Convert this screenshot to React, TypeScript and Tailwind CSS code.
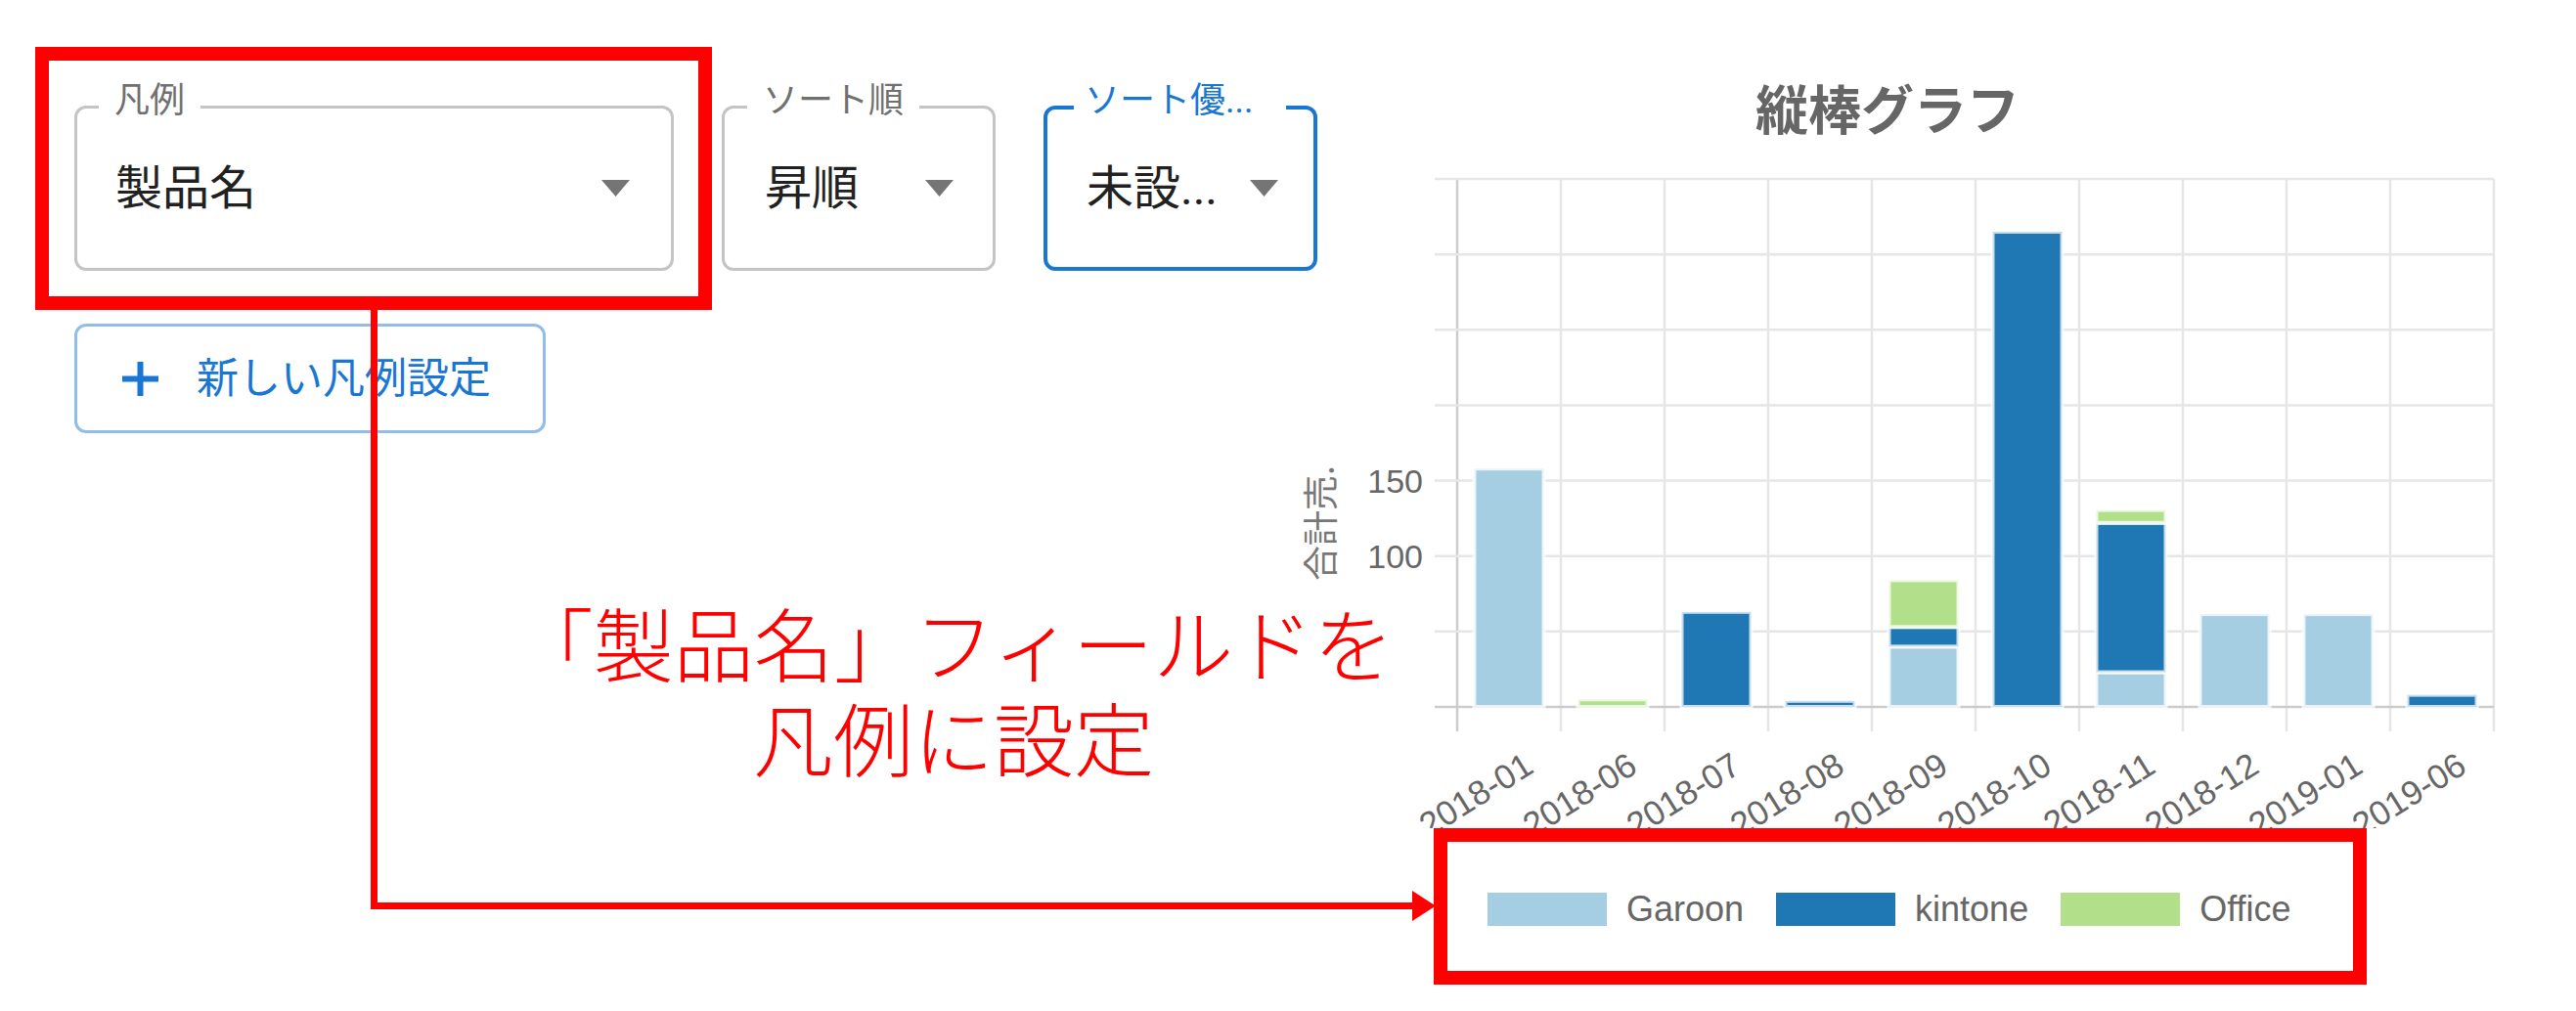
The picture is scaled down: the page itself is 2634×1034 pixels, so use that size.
import React from "react";

type Key = "G" | "K" | "O";
const COLORS: Record<Key, string> = { G: "#a6cee3", K: "#1f78b4", O: "#b2df8a" };
const LABELS = [
  "2018-01",
  "2018-06",
  "2018-07",
  "2018-08",
  "2018-09",
  "2018-10",
  "2018-11",
  "2018-12",
  "2019-01",
  "2019-06",
];
const DATA: [Key, number][][] = [
  [["G", 158]],
  [["O", 5]],
  [["K", 63]],
  [["K", 4]],
  [
    ["G", 40],
    ["K", 13],
    ["O", 31],
  ],
  [["K", 315]],
  [
    ["G", 23],
    ["K", 99],
    ["O", 8.5],
  ],
  [["G", 61.5]],
  [["G", 61.5]],
  [["K", 8]],
];

function Arrow() {
  return (
    <svg width={29} height={17} viewBox="0 0 29 17" className="shrink-0">
      <polygon points="0,0 29,0 14.5,17" fill="#757575" />
    </svg>
  );
}

function Chart() {
  const x0 = 142;
  const colW = 106;
  const base = 582;
  const step = 77.14;
  const unit = step / 50;
  const barW = 71;
  const sans = "'Liberation Sans', Arial, sans-serif";
  return (
    <div className="relative w-[1212px] h-[706px] shrink-0">
      <span className="absolute left-[-20px] top-[376px] w-[40px] h-[36px] flex items-center justify-center">
        <span className="block -rotate-90 whitespace-nowrap text-[36px] leading-[36px] text-[#777777] font-['Noto_Sans_CJK_JP',sans-serif]">
          合計売.
        </span>
      </span>
      <svg width={1212} height={706} viewBox="0 0 1212 706" className="block">
        {Array.from({ length: 11 }).map((_, i) => (
          <line
            key={"v" + i}
            x1={x0 + colW * i}
            x2={x0 + colW * i}
            y1={42}
            y2={607}
            stroke={i === 0 ? "#cccccc" : "#e6e6e6"}
            strokeWidth={2.5}
          />
        ))}
        {Array.from({ length: 8 }).map((_, k) => (
          <line
            key={"h" + k}
            x1={x0 - 23}
            x2={x0 + colW * 10}
            y1={base - step * k}
            y2={base - step * k}
            stroke={k === 0 ? "#cccccc" : "#e6e6e6"}
            strokeWidth={2.5}
          />
        ))}
        {DATA.map((segs, i) => {
          const bx = x0 + colW * i + (colW - barW) / 2;
          let acc = 0;
          return (
            <g key={"b" + i}>
              {segs.map(([k, v], j) => {
                const y1 = base - acc * unit;
                acc += v;
                const y2 = base - acc * unit;
                return (
                  <rect
                    key={j}
                    x={bx}
                    y={y2}
                    width={barW}
                    height={y1 - y2}
                    fill={COLORS[k]}
                    stroke="#ffffff"
                    strokeOpacity={0.75}
                    strokeWidth={4}
                  />
                );
              })}
            </g>
          );
        })}
        <text x={x0 - 35} y={base - step * 3 + 12} textAnchor="end" fontSize={34} fill="#666666" fontFamily={sans}>
          150
        </text>
        <text x={x0 - 35} y={base - step * 2 + 12} textAnchor="end" fontSize={34} fill="#666666" fontFamily={sans}>
          100
        </text>
        {LABELS.map((l, i) => {
          const cx = x0 + colW * i + colW / 2;
          const px = cx + 27;
          const py = 648;
          return (
            <text
              key={"l" + i}
              x={px}
              y={py}
              transform={`rotate(-32 ${px} ${py})`}
              textAnchor="end"
              fontSize={35}
              fill="#666666"
              fontFamily={sans}
            >
              {l}
            </text>
          );
        })}
      </svg>
    </div>
  );
}

export default function App() {
  return (
    <div className="relative flex w-[2634px] h-[1034px] overflow-hidden bg-white font-['Roboto','Noto_Sans_CJK_JP',sans-serif]">
      {/* Form column */}
      <div className="w-[1348px] shrink-0 pl-[76px] pt-[108px]">
        <div className="flex gap-[49px]">
          <div className="relative flex w-[613px] h-[169px] shrink-0 items-center justify-between rounded-[12px] border-[3px] border-[#c4c4c4] pl-[39px] pr-[42px]">
            <span className="absolute left-[22px] -top-[26px] bg-white px-[16px] text-[36px] leading-[36px] text-[#707070] whitespace-nowrap">
              凡例
            </span>
            <span className="text-[48px] leading-[48px] text-[#212121]">製品名</span>
            <Arrow />
          </div>
          <div className="relative flex w-[280px] h-[169px] shrink-0 items-center justify-between rounded-[12px] border-[3px] border-[#c4c4c4] pl-[41px] pr-[40px]">
            <span className="absolute left-[23px] -top-[26px] bg-white px-[16px] text-[36px] leading-[36px] text-[#707070] whitespace-nowrap">
              ソート順
            </span>
            <span className="text-[48px] leading-[48px] text-[#212121]">昇順</span>
            <Arrow />
          </div>
          <div className="relative flex w-[280px] h-[169px] shrink-0 items-center justify-between rounded-[12px] border-[4px] border-[#1976d2] pl-[40px] pr-[36px]">
            <span className="absolute left-[27px] -top-[27px] bg-white pl-[11px] pr-[34px] text-[36px] leading-[36px] text-[#1976d2] whitespace-nowrap">
              ソート優...
            </span>
            <span className="text-[48px] leading-[48px] text-[#212121] whitespace-nowrap">未設...</span>
            <Arrow />
          </div>
        </div>
        <button className="mt-[54px] flex w-[482px] h-[112px] items-center gap-[39px] rounded-[12px] border-[3px] border-[#90bde9] bg-white pl-[46px] text-[#1976d2]">
          <svg width={37} height={35} viewBox="0 0 37 35" className="shrink-0">
            <rect x={15.5} y={0} width={6} height={35} fill="#1976d2" />
            <rect x={0} y={14.5} width={37} height={6} fill="#1976d2" />
          </svg>
          <span className="text-[43px] leading-[43px] whitespace-nowrap">新しい凡例設定</span>
        </button>
      </div>

      {/* Chart column */}
      <div className="w-[1212px] shrink-0 flex flex-col items-start pt-[79px]">
        <div className="ml-[447px] h-[62px] text-[54px] leading-[62px] font-bold text-[#666666] whitespace-nowrap font-['Noto_Sans_CJK_JP',sans-serif]">
          縦棒グラフ
        </div>
        <Chart />
        <div className="ml-[173px] mt-[63px] flex h-[40px] items-center font-['Liberation_Sans',Arial,sans-serif] text-[36px] leading-[40px] text-[#666666]">
          <div className="flex items-center gap-[20px]">
            <span className="block w-[122px] h-[34px] bg-[#a6cee3]" />
            <span>Garoon</span>
          </div>
          <div className="ml-[33px] flex items-center gap-[20px]">
            <span className="block w-[122px] h-[34px] bg-[#1f78b4]" />
            <span>kintone</span>
          </div>
          <div className="ml-[33px] flex items-center gap-[20px]">
            <span className="block w-[122px] h-[34px] bg-[#b2df8a]" />
            <span>Office</span>
          </div>
        </div>
      </div>

      {/* Annotation overlays */}
      <div className="absolute left-[36px] top-[48px] w-[692px] h-[269px] border-[14px] border-[#ff0000]" />
      <div className="absolute left-[379px] top-[317px] w-[7px] h-[613px] bg-[#ff0000]" />
      <div className="absolute left-[379px] top-[923px] w-[1068px] h-[7px] bg-[#ff0000]" />
      <svg className="absolute left-[1444px] top-[911px]" width={24} height={31} viewBox="0 0 24 31">
        <polygon points="0,0 24,15.5 0,31" fill="#ff0000" />
      </svg>
      <div className="absolute left-[1466px] top-[847px] w-[954px] h-[160px] border-[14px] border-[#ff0000]" />
      <div className="absolute left-[475px] top-[607px] w-[1000px] text-center whitespace-nowrap text-[82px] leading-[97px] font-light text-[#ff0000] font-['Noto_Sans_CJK_JP_Light','Noto_Sans_CJK_JP',sans-serif]">
        「製品名」フィールドを
        <br />
        凡例に設定
      </div>
    </div>
  );
}
